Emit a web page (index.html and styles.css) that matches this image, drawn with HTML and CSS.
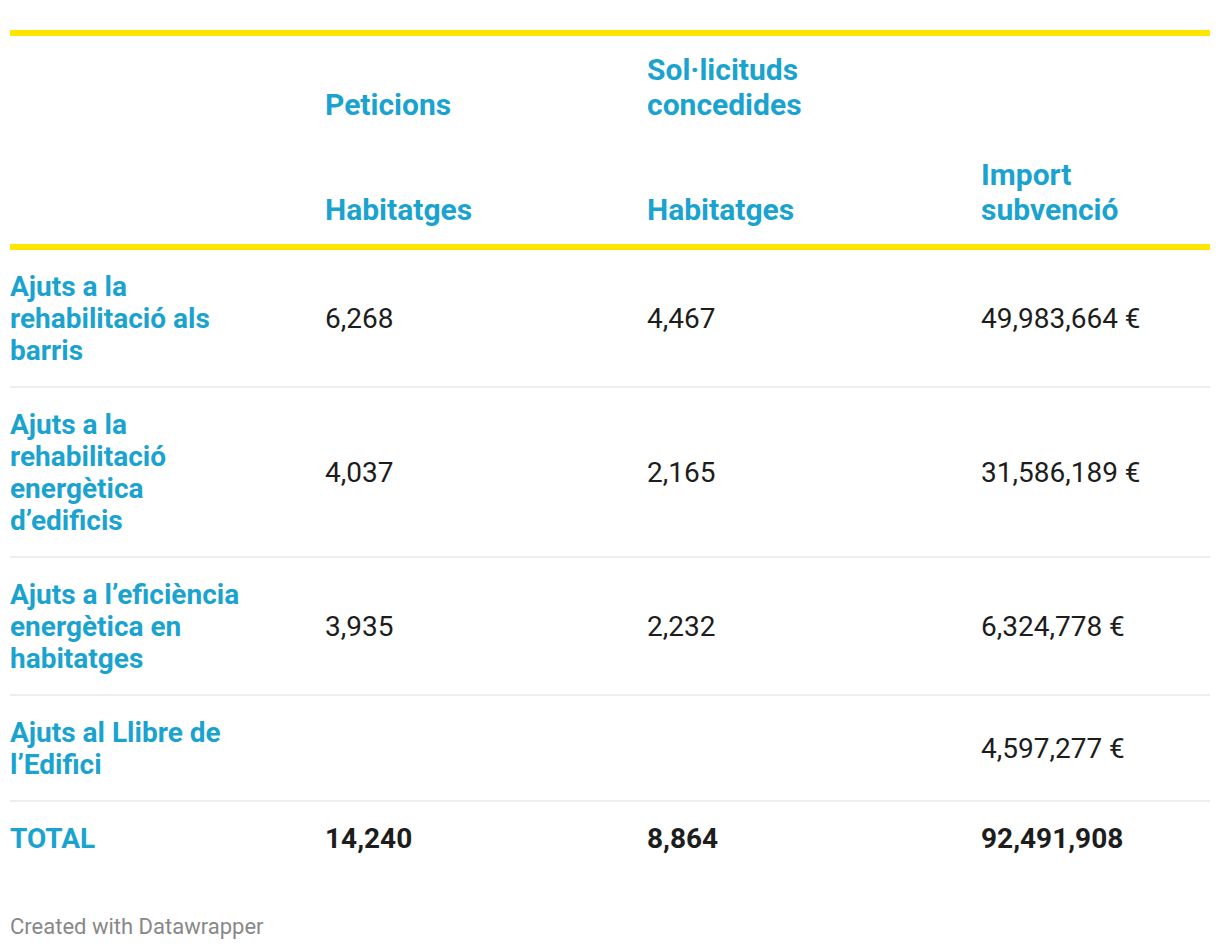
FILE: index.html
```html
<!DOCTYPE html>
<html lang="ca">
<head>
<meta charset="utf-8">
<title>Ajuts a la rehabilitació</title>
<link rel="stylesheet" href="styles.css">
</head>
<body>
<div class="chart">
  <table class="tbl">
    <thead>
      <tr class="h1">
        <th class="c1"></th>
        <th class="c2"><span class="hd">Peticions</span></th>
        <th class="c3"><span class="hd">Sol·licituds concedides</span></th>
        <th class="c4"></th>
      </tr>
      <tr class="h2">
        <th class="c1"></th>
        <th class="c2"><span class="hd">Habitatges</span></th>
        <th class="c3"><span class="hd">Habitatges</span></th>
        <th class="c4"><span class="hd">Import subvenció</span></th>
      </tr>
    </thead>
    <tbody>
      <tr>
        <th class="c1"><span class="lbl">Ajuts a la rehabilitació als barris</span></th>
        <td>6,268</td>
        <td>4,467</td>
        <td>49,983,664 €</td>
      </tr>
      <tr>
        <th class="c1"><span class="lbl">Ajuts a la rehabilitació energètica d’edificis</span></th>
        <td>4,037</td>
        <td>2,165</td>
        <td>31,586,189 €</td>
      </tr>
      <tr>
        <th class="c1"><span class="lbl">Ajuts a l’eficiència energètica en habitatges</span></th>
        <td>3,935</td>
        <td>2,232</td>
        <td>6,324,778 €</td>
      </tr>
      <tr>
        <th class="c1"><span class="lbl">Ajuts al Llibre de l’Edifici</span></th>
        <td></td>
        <td></td>
        <td>4,597,277 €</td>
      </tr>
      <tr class="total">
        <th class="c1"><span class="lbl">TOTAL</span></th>
        <td>14,240</td>
        <td>8,864</td>
        <td>92,491,908</td>
      </tr>
    </tbody>
  </table>
  <div class="footer">Created with Datawrapper</div>
</div>
</body>
</html>
```

FILE: styles.css
```css
html, body {
  margin: 0;
  padding: 0;
  background: #ffffff;
}

body {
  font-family: Roboto, "Liberation Sans", sans-serif;
  color: #1d1d1d;
}

.chart {
  padding: 30px 10px 0 10px;
}

.tbl {
  width: 100%;
  border-collapse: collapse;
  table-layout: fixed;
  font-size: 28px;
  line-height: 32px;
}

.tbl th,
.tbl td {
  padding: 0;
  text-align: left;
  vertical-align: middle;
}

.c1 { width: 315px; }
.c2 { width: 322px; }
.c3 { width: 334px; }

.tbl thead th {
  vertical-align: bottom;
  font-weight: 700;
  font-size: 30px;
  line-height: 35px;
  color: #1ba3d0;
}

.hd {
  display: block;
  max-width: 240px;
}

.h1 th {
  border-top: 6px solid #ffe500;
  padding-top: 16px;
  padding-bottom: 17px;
}

.h2 th {
  padding-top: 18px;
  padding-bottom: 17px;
  border-bottom: 6px solid #ffe500;
}

.tbl tbody th {
  font-weight: 700;
  color: #1ba3d0;
}

.lbl {
  display: block;
  max-width: 240px;
}

.tbl tbody th,
.tbl tbody td {
  padding-top: 21px;
  padding-bottom: 19px;
  border-bottom: 2px solid #eeeeee;
}

.tbl tbody tr.total th,
.tbl tbody tr.total td {
  border-bottom: none;
}

.tbl tbody tr.total td {
  font-weight: 700;
}

.footer {
  margin-top: 40px;
  font-size: 22px;
  line-height: 26px;
  color: #888888;
}
```
